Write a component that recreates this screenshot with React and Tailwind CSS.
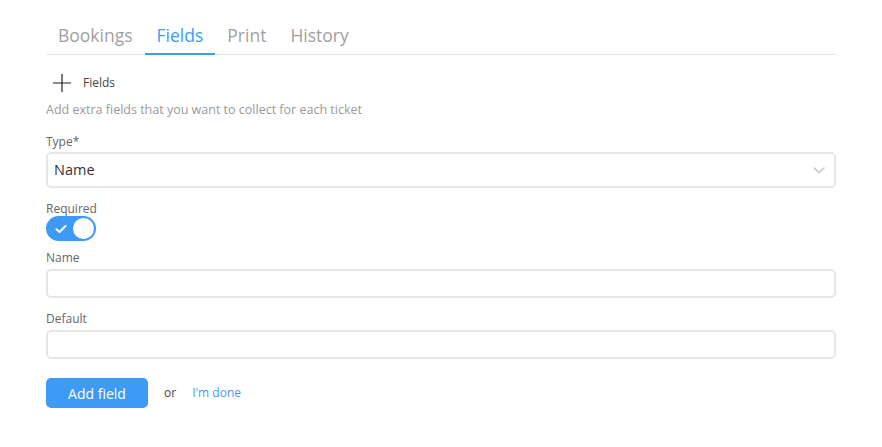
import React, { useState } from 'react';

const font = { fontFamily: '"Segoe UI", "Open Sans", "Noto Sans", sans-serif' };

const Tabs = ({ active, onChange }) => {
  const tabs = ['Bookings', 'Fields', 'Print', 'History'];
  return (
    <div className="flex border-b border-[#e4e4e4]">
      {tabs.map((t) => (
        <button
          key={t}
          onClick={() => onChange(t)}
          className={
            'px-3 pt-[19px] pb-[2px] text-[17.5px] leading-[32px] -mb-px border-b-2 ' +
            (active === t ? 'text-[#3d9bf5] border-[#3d9bf5]' : 'text-[#a0a0a0] border-transparent')
          }
        >
          {t}
        </button>
      ))}
    </div>
  );
};

const Field = ({ label, children, className = '' }) => (
  <div className={className}>
    <div className="text-[12px] leading-[16px] text-[#666]">{label}</div>
    {children}
  </div>
);

export default function App() {
  const [tab, setTab] = useState('Fields');
  const [required, setRequired] = useState(true);

  return (
    <div className="bg-white w-[882px] h-[447px] pl-[46px] pr-[46px]" style={font}>
      <Tabs active={tab} onChange={setTab} />

      <div className="flex items-center mt-[19px] h-[18px]">
        <svg width="20" height="20" viewBox="0 0 20 20" className="ml-[6px]">
          <path d="M10 1v18M1 10h18" stroke="#222" strokeWidth="1.2" fill="none" />
        </svg>
        <span className="ml-[11px] text-[12px] text-[#444]">Fields</span>
      </div>
      <div className="mt-[10px] text-[12.5px] leading-[16px] text-[#999]">
        Add extra fields that you want to collect for each ticket
      </div>

      <Field label="Type*" className="mt-[16px]">
        <div className="mt-[2px] h-[36px] rounded-[5px] border-2 border-[#e6e6e6] flex items-center justify-between pl-[6px] pr-[8px]">
          <span className="text-[14.5px] text-[#333]">Name</span>
          <svg width="14" height="14" viewBox="0 0 14 14">
            <path d="M2 5l5 4.5L12 5" stroke="#c4c4c4" strokeWidth="1.6" fill="none" strokeLinecap="round" />
          </svg>
        </div>
      </Field>

      <Field label="Required" className="mt-[13px]">
        <button
          onClick={() => setRequired(!required)}
          className={
            'mt-[-1px] w-[50px] h-[25px] rounded-full flex items-center px-[2px] ' +
            (required ? 'bg-[#3d9bf5] justify-end' : 'bg-[#ddd] justify-start')
          }
        >
          {required && (
            <svg width="14" height="14" viewBox="0 0 14 14" className="mr-auto ml-[6px]">
              <path d="M2.5 7.2l3 2.8 6-6" stroke="#fff" strokeWidth="2" fill="none" strokeLinecap="round" strokeLinejoin="round" />
            </svg>
          )}
          <span className="w-[21px] h-[21px] rounded-full bg-white" />
        </button>
      </Field>

      <Field label="Name" className="mt-[9px]">
        <input className="mt-[3px] w-full h-[29px] rounded-[5px] border-2 border-[#e6e6e6] outline-none px-[6px] text-[14px]" />
      </Field>

      <Field label="Default" className="mt-[13px]">
        <input className="mt-[3px] w-full h-[29px] rounded-[5px] border-2 border-[#e6e6e6] outline-none px-[6px] text-[14px]" />
      </Field>

      <div className="flex items-center mt-[19px]">
        <button className="w-[102px] h-[30px] rounded-[5px] bg-[#3d9bf5] text-white text-[14px]">Add field</button>
        <span className="ml-[16px] text-[12px] text-[#444]">or</span>
        <a href="#" className="ml-[16px] text-[12px] text-[#3d9bf5]">I'm done</a>
      </div>
    </div>
  );
}
